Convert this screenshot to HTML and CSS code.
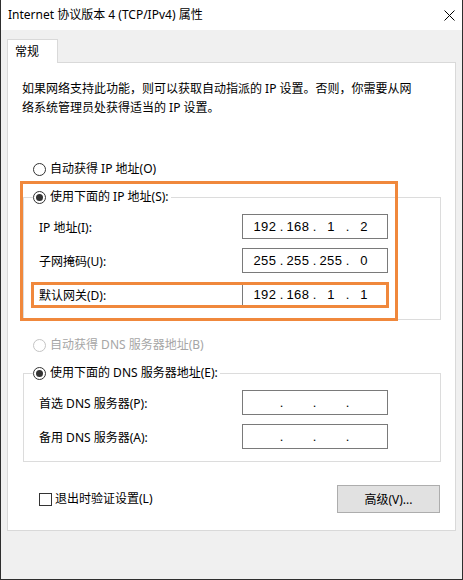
FILE: index.html
```html
<!DOCTYPE html>
<html lang="zh-CN">
<head>
    <meta charset="UTF-8">
    <title>Internet 协议版本 4 (TCP/IPv4) 属性</title>
    <link rel="stylesheet" href="styles.css">
</head>
<body>
    <div class="window">
        <div class="titlebar">
            <span class="title">Internet 协议版本 4 (TCP/IPv4) 属性</span>
            <svg class="close" width="11" height="11" viewBox="0 0 11 11">
                <path d="M0.5 0.5 L10.5 10.5 M10.5 0.5 L0.5 10.5" stroke="#000" stroke-width="1" fill="none"/>
            </svg>
        </div>

        <div class="body">
            <div class="tabs">
                <div class="tab">常规</div>
            </div>

            <div class="panel">
                <p class="desc">如果网络支持此功能，则可以获取自动指派的 IP 设置。否则，你需要从网<br>络系统管理员处获得适当的 IP 设置。</p>

                <label class="radio"><span class="circle"></span>自动获得 IP 地址(O)</label>

                <fieldset class="group">
                    <legend><label class="radio"><span class="circle checked"></span>使用下面的 IP 地址(S):</label></legend>
                    <div class="row">
                        <span>IP 地址(I):</span>
                        <div class="ipbox"><span>192</span><i>.</i><span>168</span><i>.</i><span>1</span><i>.</i><span>2</span></div>
                    </div>
                    <div class="row">
                        <span>子网掩码(U):</span>
                        <div class="ipbox"><span>255</span><i>.</i><span>255</span><i>.</i><span>255</span><i>.</i><span>0</span></div>
                    </div>
                    <div class="row">
                        <span>默认网关(D):</span>
                        <div class="ipbox"><span>192</span><i>.</i><span>168</span><i>.</i><span>1</span><i>.</i><span>1</span></div>
                    </div>
                </fieldset>

                <label class="radio disabled"><span class="circle"></span>自动获得 DNS 服务器地址(B)</label>

                <fieldset class="group">
                    <legend><label class="radio"><span class="circle checked"></span>使用下面的 DNS 服务器地址(E):</label></legend>
                    <div class="row">
                        <span>首选 DNS 服务器(P):</span>
                        <div class="ipbox"><span></span><i>.</i><span></span><i>.</i><span></span><i>.</i><span></span></div>
                    </div>
                    <div class="row">
                        <span>备用 DNS 服务器(A):</span>
                        <div class="ipbox"><span></span><i>.</i><span></span><i>.</i><span></span><i>.</i><span></span></div>
                    </div>
                </fieldset>

                <div class="footer">
                    <label class="check"><span class="box"></span>退出时验证设置(L)</label>
                    <button class="btn">高级(V)...</button>
                </div>

                <!-- 标注框 -->
                <div class="mark mark-ip"></div>
                <div class="mark mark-gw"></div>
            </div>
        </div>
    </div>
</body>
</html>
```

FILE: styles.css
```css
* {
    margin: 0;
    padding: 0;
    box-sizing: border-box;
}

body {
    background-color: #f0f0f0;
    font-family: "Noto Sans", "Noto Sans CJK SC", sans-serif;
    font-size: 12px;
    color: #000;
}

.window {
    width: 463px;
    height: 580px;
    border: 1px solid #2e2e2e;
    border-top: none;
    background-color: #f0f0f0;
}

.titlebar {
    height: 30px;
    background-color: #fff;
    display: flex;
    align-items: center;
    justify-content: space-between;
    padding: 0 7px 0 7px;
}

.title {
    line-height: 16px;
}

.body {
    padding: 9px 6px 0 6px;
}

.tabs {
    display: flex;
}

.tab {
    width: 51px;
    height: 24px;
    margin-bottom: -1px;
    background-color: #fff;
    border: 1px solid #d9d9d9;
    border-bottom: none;
    padding-left: 7px;
    line-height: 23px;
    position: relative;
    z-index: 1;
}

.panel {
    position: relative;
    height: 469px;
    background-color: #fff;
    border: 1px solid #d9d9d9;
}

.desc {
    margin: 16px 0 0 14px;
    line-height: 19px;
}

.radio {
    display: flex;
    align-items: center;
    height: 18px;
    line-height: 18px;
    white-space: nowrap;
}

.panel > .radio {
    margin: 43px 0 0 25px;
}

.panel > .radio.disabled {
    margin-top: 16px;
}

.circle {
    width: 13px;
    height: 13px;
    border: 1px solid #333;
    border-radius: 50%;
    background-color: #fff;
    margin-right: 4px;
    display: flex;
    align-items: center;
    justify-content: center;
}

.circle.checked::after {
    content: "";
    width: 7px;
    height: 7px;
    border-radius: 50%;
    background-color: #333;
}

.radio.disabled {
    color: #a6a6a6;
}

.radio.disabled .circle {
    border-color: #c4c4c4;
}

.group {
    margin: 10px 0 0 15px;
    width: 418px;
    border: 1px solid #dcdcdc;
    padding: 8px 52px 12px 15px;
}

.group legend {
    margin-left: -6px;
    padding: 0 2px 0 0;
    background-color: #fff;
}

.row {
    display: grid;
    grid-template-columns: 1fr 146px;
    align-items: center;
    height: 25px;
}

.row + .row {
    margin-top: 9px;
}

.ipbox {
    height: 25px;
    border: 1px solid #7a7a7a;
    background-color: #fff;
    display: flex;
    align-items: center;
    padding-left: 8px;
    font-family: "Liberation Sans", sans-serif;
    font-size: 13px;
    letter-spacing: 0.5px;
}

.ipbox span {
    width: 28px;
    text-align: center;
}

.ipbox i {
    font-style: normal;
    width: 5px;
    text-align: center;
    letter-spacing: 0;
}

.footer {
    margin-top: 23px;
    padding: 0 15px 0 31px;
    display: flex;
    align-items: center;
    justify-content: space-between;
}

.check {
    display: flex;
    align-items: center;
    line-height: 18px;
}

.box {
    width: 13px;
    height: 13px;
    border: 1px solid #333;
    background-color: #fff;
    margin-right: 3px;
}

.btn {
    width: 103px;
    height: 28px;
    background-color: #e1e1e1;
    border: 1px solid #adadad;
    font-family: inherit;
    font-size: 12px;
    color: #000;
}

.mark {
    position: absolute;
    border: 3px solid #f0883c;
}

.mark-ip {
    left: 12px;
    top: 118px;
    width: 378px;
    height: 140px;
}

.mark-gw {
    left: 23px;
    top: 219px;
    width: 358px;
    height: 26px;
}
```
